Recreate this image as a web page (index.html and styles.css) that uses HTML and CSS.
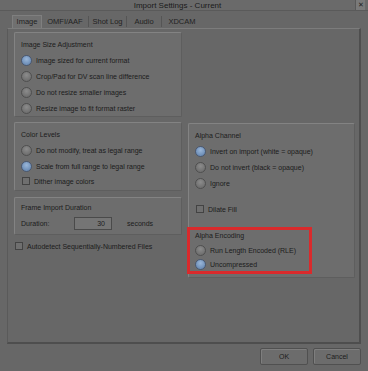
FILE: index.html
```html
<!DOCTYPE html>
<html>
<head>
<meta charset="utf-8">
<link rel="stylesheet" href="styles.css">
</head>
<body>
<div class="dialog">
  <div class="titlebar">
    <span class="title">Import Settings - Current</span>
    <span class="close">✕</span>
  </div>
  <div class="tabs">
    <div class="tab active t-image">Image</div>
    <div class="tab t-omf">OMFI/AAF</div>
    <div class="tab t-shot">Shot Log</div>
    <div class="tab t-audio">Audio</div>
    <div class="tab t-xd">XDCAM</div>
  </div>
  <div class="panel">
    <div class="group g-size">
      <div class="glabel">Image Size Adjustment</div>
      <div class="row"><span class="radio on"></span>Image sized for current format</div>
      <div class="row"><span class="radio"></span>Crop/Pad for DV scan line difference</div>
      <div class="row"><span class="radio"></span>Do not resize smaller images</div>
      <div class="row"><span class="radio"></span>Resize image to fit format raster</div>
    </div>
    <div class="leftstack">
      <div class="group">
        <div class="glabel">Color Levels</div>
        <div class="row"><span class="radio"></span>Do not modify, treat as legal range</div>
        <div class="row"><span class="radio on"></span>Scale from full range to legal range</div>
        <div class="crow"><span class="check"></span>Dither image colors</div>
      </div>
      <div class="group g-frame">
        <div class="glabel">Frame Import Duration</div>
        <div class="drow"><span class="dlabel">Duration:</span><span class="input">30</span><span class="unit">seconds</span></div>
      </div>
      <div class="crow auto"><span class="check"></span>Autodetect Sequentially-Numbered Files</div>
    </div>
    <div class="group g-alpha">
      <div class="glabel">Alpha Channel</div>
      <div class="row"><span class="radio on"></span>Invert on import (white = opaque)</div>
      <div class="row"><span class="radio"></span>Do not invert (black = opaque)</div>
      <div class="row"><span class="radio"></span>Ignore</div>
      <div class="crow dilate"><span class="check"></span>Dilate Fill</div>
      <div class="encoding">
        <div class="glabel">Alpha Encoding</div>
        <div class="row sm"><span class="radio"></span>Run Length Encoded (RLE)</div>
        <div class="row sm"><span class="radio on"></span>Uncompressed</div>
      </div>
    </div>
  </div>
  <div class="buttons">
    <div class="btn">OK</div>
    <div class="btn">Cancel</div>
  </div>
</div>
</body>
</html>
```
FILE: styles.css
```css
* { box-sizing: border-box; }
html, body { margin: 0; padding: 0; }
body {
  background: #676767;
  font-family: "Liberation Sans", Arial, sans-serif;
  font-size: 7px;
  color: #1c1c1c;
}
.dialog {
  width: 368px;
  height: 371px;
  display: flex;
  flex-direction: column;
  background: #676767;
}
.titlebar {
  height: 11px;
  display: flex;
  align-items: center;
  border-bottom: 1px solid #5a5a5a;
  background: #6a6a6a;
}
.title {
  flex: 1;
  text-align: center;
  font-size: 8px;
  color: #1a1a1a;
}
.close {
  width: 10px;
  height: 10px;
  margin-right: 3px;
  font-size: 7px;
  line-height: 10px;
  text-align: center;
  background: #7a7a7a;
  border-left: 1px solid #595959;
  color: #222;
}
.tabs {
  display: flex;
  margin: 4px 0 0 12px;
  height: 13px;
  font-size: 7.5px;
}
.tab {
  text-align: center;
  border-right: 1px solid #555;
  margin-top: 1px;
  height: 11px;
  line-height: 11px;
  color: #222;
}
.t-image { width: 30px; }
.t-omf { width: 47px; }
.t-shot { width: 38px; }
.t-audio { width: 35px; }
.t-xd { width: 40px; border-right: none; }
.tab.active {
  background: #707070;
  border: 1px solid #7f7f7f;
  border-bottom: none;
  margin-top: 0;
  height: 13px;
  line-height: 12px;
}
.panel {
  margin: 0 7px;
  height: 316px;
  border: 1px solid #5a5a5a;
  border-right: 2px solid #4e4e4e;
  border-bottom: 2px solid #4e4e4e;
  border-top-color: #7c7c7c;
  padding: 3px 4px 0 6px;
  display: grid;
  grid-template-columns: 168px 167px;
  grid-template-rows: auto auto;
  align-content: start;
  column-gap: 6px;
  row-gap: 5px;
  align-items: start;
}
.g-size { grid-column: 1; grid-row: 1; }
.leftstack { grid-column: 1; grid-row: 2; display: flex; flex-direction: column; }
.g-alpha { grid-column: 2; grid-row: 2; margin-top: 1px; }
.group {
  background: #6d6d6d;
  border: 1px solid #838383;
  border-right-color: #5e5e5e;
  border-bottom-color: #5e5e5e;
  border-radius: 2px;
  padding: 7px 6px 0 6px;
}
.glabel {
  line-height: 10px;
  height: 10px;
  margin-bottom: 2px;
}
.row {
  height: 16px;
  display: flex;
  align-items: center;
}
.row.sm { height: 14px; }
.radio {
  width: 11px;
  height: 11px;
  border-radius: 50%;
  border: 1px solid #4f4f4f;
  background: radial-gradient(circle at 50% 35%, #8c8c8c, #707070 70%);
  margin-right: 4px;
  flex: none;
}
.radio.on {
  border-color: #4a5870;
  background: radial-gradient(circle at 50% 35%, #9ab6d8, #6e8fb8 70%);
}
.crow {
  height: 14px;
  display: flex;
  align-items: center;
  padding-left: 1px;
}
.check {
  width: 8px;
  height: 8px;
  border: 1px solid #434343;
  background: #6f6f6f;
  margin-right: 4px;
  flex: none;
}
.leftstack .group:first-child { padding-bottom: 2px; }
.g-frame { margin-top: 6px; padding-top: 5px; padding-bottom: 3px; }
.drow {
  height: 16px;
  display: flex;
  align-items: center;
}
.dlabel { width: 53px; }
.input {
  width: 38px;
  height: 13px;
  border: 1px solid #4a4a4a;
  background: #757575;
  text-align: right;
  padding-right: 6px;
  line-height: 11px;
}
.unit { margin-left: 15px; }
.auto { margin-top: 5px; height: 12px; padding-left: 1px; }
.g-alpha { padding-left: 6px; padding-bottom: 3px; }
.dilate { margin-top: 11px; }
.encoding {
  margin: 11px 0 0 -8px;
  width: 125px;
  border: 3px solid #d92a2c;
  padding: 1px 0 0 5px;
}
.buttons {
  display: flex;
  justify-content: flex-end;
  gap: 5px;
  padding-right: 7px;
  margin-top: 4px;
}
.btn {
  width: 48px;
  height: 17px;
  line-height: 15px;
  text-align: center;
  border: 1px solid #505050;
  background: #6c6c6c;
  box-shadow: inset 1px 1px 0 #7e7e7e;
  border-radius: 2px;
}
```
